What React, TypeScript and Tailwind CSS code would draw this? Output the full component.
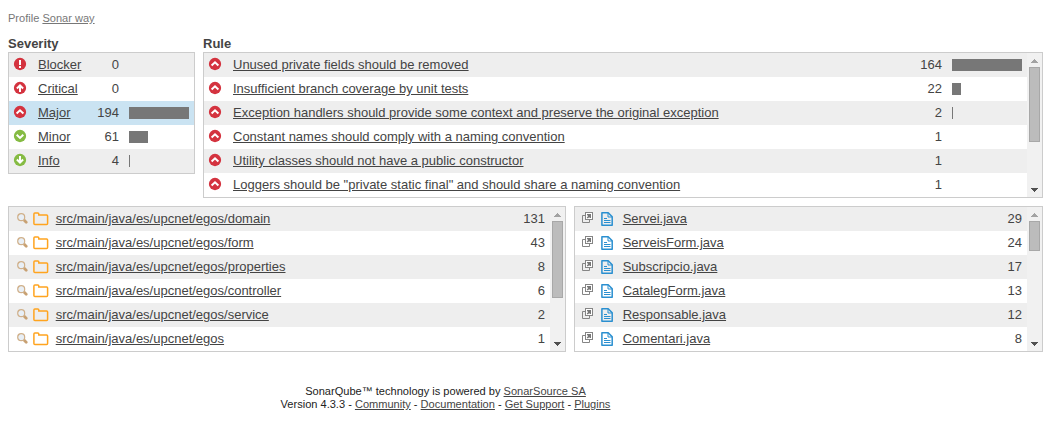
import type { ReactNode } from 'react';

type Level = 'blocker' | 'critical' | 'major' | 'minor' | 'info';

const severities: { name: string; level: Level; count: number; bar: number }[] = [
  { name: 'Blocker', level: 'blocker', count: 0, bar: 0 },
  { name: 'Critical', level: 'critical', count: 0, bar: 0 },
  { name: 'Major', level: 'major', count: 194, bar: 60 },
  { name: 'Minor', level: 'minor', count: 61, bar: 19 },
  { name: 'Info', level: 'info', count: 4, bar: 1 },
];

const rules = [
  { name: 'Unused private fields should be removed', count: 164, bar: 70 },
  { name: 'Insufficient branch coverage by unit tests', count: 22, bar: 9 },
  { name: 'Exception handlers should provide some context and preserve the original exception', count: 2, bar: 1 },
  { name: 'Constant names should comply with a naming convention', count: 1, bar: 0 },
  { name: 'Utility classes should not have a public constructor', count: 1, bar: 0 },
  { name: 'Loggers should be "private static final" and should share a naming convention', count: 1, bar: 0 },
];

const folders = [
  { name: 'src/main/java/es/upcnet/egos/domain', count: 131 },
  { name: 'src/main/java/es/upcnet/egos/form', count: 43 },
  { name: 'src/main/java/es/upcnet/egos/properties', count: 8 },
  { name: 'src/main/java/es/upcnet/egos/controller', count: 6 },
  { name: 'src/main/java/es/upcnet/egos/service', count: 2 },
  { name: 'src/main/java/es/upcnet/egos', count: 1 },
];

const files = [
  { name: 'Servei.java', count: 29 },
  { name: 'ServeisForm.java', count: 24 },
  { name: 'Subscripcio.java', count: 17 },
  { name: 'CatalegForm.java', count: 13 },
  { name: 'Responsable.java', count: 12 },
  { name: 'Comentari.java', count: 8 },
];

const glyphs: Record<Level, string> = {
  blocker: 'M6 2V7M6 8.1V9.9',
  critical: 'M6 9.9V3.6M2.9 6.5L6 3.4L9.1 6.5',
  major: 'M2.6 7.5L6 4.3L9.4 7.5',
  minor: 'M2.7 4.7L6 7.9L9.3 4.7',
  info: 'M6 2.1V8.4M2.9 5.5L6 8.6L9.1 5.5',
};

function SeverityIcon({ level }: { level: Level }) {
  const green = level === 'minor' || level === 'info';
  return (
    <svg width="12" height="12" viewBox="0 0 12 12" className="mb-0.5 shrink-0 overflow-visible">
      <circle cx="6" cy="6" r="6.15" fill={green ? '#85bb43' : '#d4333f'} />
      <path d={glyphs[level]} fill="none" stroke="#fff" strokeWidth="2" />
    </svg>
  );
}

function ZoomIcon() {
  return (
    <svg width="11" height="11" viewBox="0 0 11 11" className="mb-px shrink-0">
      <path d="M7 7L9.2 9.2" stroke="#c8a173" strokeWidth="2.8" strokeLinecap="round" />
      <circle cx="4.2" cy="4.2" r="3.5" fill="#e8eff6" stroke="#d0b08a" strokeWidth="1.2" />
    </svg>
  );
}

function FolderIcon() {
  return (
    <svg width="16" height="14" viewBox="0 0 16 14" className="shrink-0">
      <path
        d="M.9 11.4V1.9Q.9.9 1.9.9H4.8Q5.8.9 5.8 1.9V2.9H13.6Q14.6 2.9 14.6 3.9V11.4Q14.6 12.4 13.6 12.4H1.9Q.9 12.4.9 11.4Z"
        fill="none"
        stroke="#ffa41f"
        strokeWidth="1.5"
      />
    </svg>
  );
}

function PopupIcon() {
  return (
    <svg width="11" height="11" viewBox="0 0 11 11" className="mb-[3px] shrink-0">
      <path d="M3 3.5H.5V10.5H7.5V8" fill="none" stroke="#858585" />
      <rect x="3.5" y=".5" width="7" height="7" fill="#fff" stroke="#858585" />
      <path d="M5 2H9V6H8L7.2 5.2L5.7 6.5L4.7 5.5L6.2 4.1L5 3Z" fill="#777" />
    </svg>
  );
}

function FileIcon() {
  return (
    <svg width="12" height="14" viewBox="0 0 12 14" className="shrink-0">
      <path d="M.9.8H7.2L11.2 4.8V13.2H.9Z" fill="none" stroke="#2a8fd0" strokeWidth="1.5" strokeLinejoin="round" />
      <path d="M7 .9V5H11.2" fill="none" stroke="#2a8fd0" />
      <path d="M3 6.5H6M3 8.5H9.5M3 10.5H9.5" stroke="#2a8fd0" />
    </svg>
  );
}

function Scrollbar({ children }: { children: ReactNode }) {
  return (
    <div className="flex w-[15px] shrink-0 flex-col items-center bg-[#f1f1f1] pt-1.5 pb-[5px]">
      <svg width="7" height="4" viewBox="0 0 7 4" shapeRendering="crispEdges">
        <path d="M3 0H4V1H5V2H6V3H7V4H0V3H1V2H2V1H3Z" fill="#a3a3a3" />
      </svg>
      {children}
      <svg width="7" height="4" viewBox="0 0 7 4" shapeRendering="crispEdges" className="mt-auto">
        <path d="M0 0H7V1H6V2H5V3H4V4H3V3H2V2H1V1H0Z" fill="#505050" />
      </svg>
    </div>
  );
}

function Bar({ width }: { width: number }) {
  return <div className="h-3 bg-[#777]" style={{ width }} />;
}

function Link({ children }: { children: ReactNode }) {
  return (
    <a href="#" className="underline">
      {children}
    </a>
  );
}

export default function App() {
  return (
    <div className="flex h-[421px] w-[1051px] flex-col overflow-hidden bg-white px-2 font-['Liberation_Sans',Arial,sans-serif] text-[13px] leading-6 text-[#444]">
      <div className="mt-3 h-[13px] text-[11.05px] leading-[13px] text-[#777]">
        Profile <Link>Sonar way</Link>
      </div>

      <div className="mt-[11px] flex items-start gap-2">
        <section className="w-[187px] shrink-0">
          <h2 className="h-4 leading-[15px] font-bold">Severity</h2>
          <div className="border border-[#ccc]">
            {severities.map((s) => (
              <div
                key={s.name}
                className={`flex h-6 items-center pl-[5px] ${s.level === 'major' ? 'bg-[#cae3f2]' : 'odd:bg-[#eee]'}`}
              >
                <SeverityIcon level={s.level} />
                <span className="ml-3">
                  <Link>{s.name}</Link>
                </span>
                <span className="mr-[10px] ml-auto">{s.count}</span>
                <div className="w-[65px]">
                  <Bar width={s.bar} />
                </div>
              </div>
            ))}
          </div>
        </section>

        <section className="min-w-0 flex-1">
          <h2 className="h-4 leading-[15px] font-bold">Rule</h2>
          <div className="flex border border-[#ccc]">
            <div className="flex-1">
              {rules.map((r) => (
                <div key={r.name} className="flex h-6 items-center pl-[5px] odd:bg-[#eee]">
                  <SeverityIcon level="major" />
                  <span className="ml-3">
                    <Link>{r.name}</Link>
                  </span>
                  <span className="mr-[10px] ml-auto">{r.count}</span>
                  <div className="w-[75px]">
                    <Bar width={r.bar} />
                  </div>
                </div>
              ))}
            </div>
            <Scrollbar>
              <div className="mt-1 h-[75px] w-[11px] border border-[#a8a8a8] bg-[#bcbcbc]" />
            </Scrollbar>
          </div>
        </section>
      </div>

      <div className="mt-2 flex gap-2">
        <div className="flex w-[558px] border border-[#ccc]">
          <div className="flex-1">
            {folders.map((f) => (
              <div key={f.name} className="flex h-6 items-center pr-[5px] pl-2 odd:bg-[#eee]">
                <ZoomIcon />
                <span className="ml-[5px] flex">
                  <FolderIcon />
                </span>
                <span className="ml-[6.7px]">
                  <Link>{f.name}</Link>
                </span>
                <span className="ml-auto">{f.count}</span>
              </div>
            ))}
          </div>
          <Scrollbar>
            <div className="mt-1 h-[77px] w-[11px] border border-[#a8a8a8] bg-[#bcbcbc]" />
          </Scrollbar>
        </div>

        <div className="flex flex-1 border border-[#ccc]">
          <div className="flex-1">
            {files.map((f) => (
              <div key={f.name} className="flex h-6 items-center pr-[5px] pl-[7px] odd:bg-[#eee]">
                <PopupIcon />
                <span className="ml-2 flex">
                  <FileIcon />
                </span>
                <span className="ml-[9.7px]">
                  <Link>{f.name}</Link>
                </span>
                <span className="ml-auto">{f.count}</span>
              </div>
            ))}
          </div>
          <Scrollbar>
            <div className="mt-1 h-[30px] w-[11px] border border-[#a8a8a8] bg-[#bcbcbc]" />
          </Scrollbar>
        </div>
      </div>

      <footer className="mt-[33px] mr-[160px] text-center text-[11.05px] leading-[13px] text-[#222]">
        <p>
          SonarQube™ technology is powered by <span className="text-[#444]"><Link>SonarSource SA</Link></span>
        </p>
        <p>
          Version 4.3.3 - <span className="text-[#444]"><Link>Community</Link></span> -{' '}
          <span className="text-[#444]"><Link>Documentation</Link></span> -{' '}
          <span className="text-[#444]"><Link>Get Support</Link></span> -{' '}
          <span className="text-[#444]"><Link>Plugins</Link></span>
        </p>
      </footer>
    </div>
  );
}
